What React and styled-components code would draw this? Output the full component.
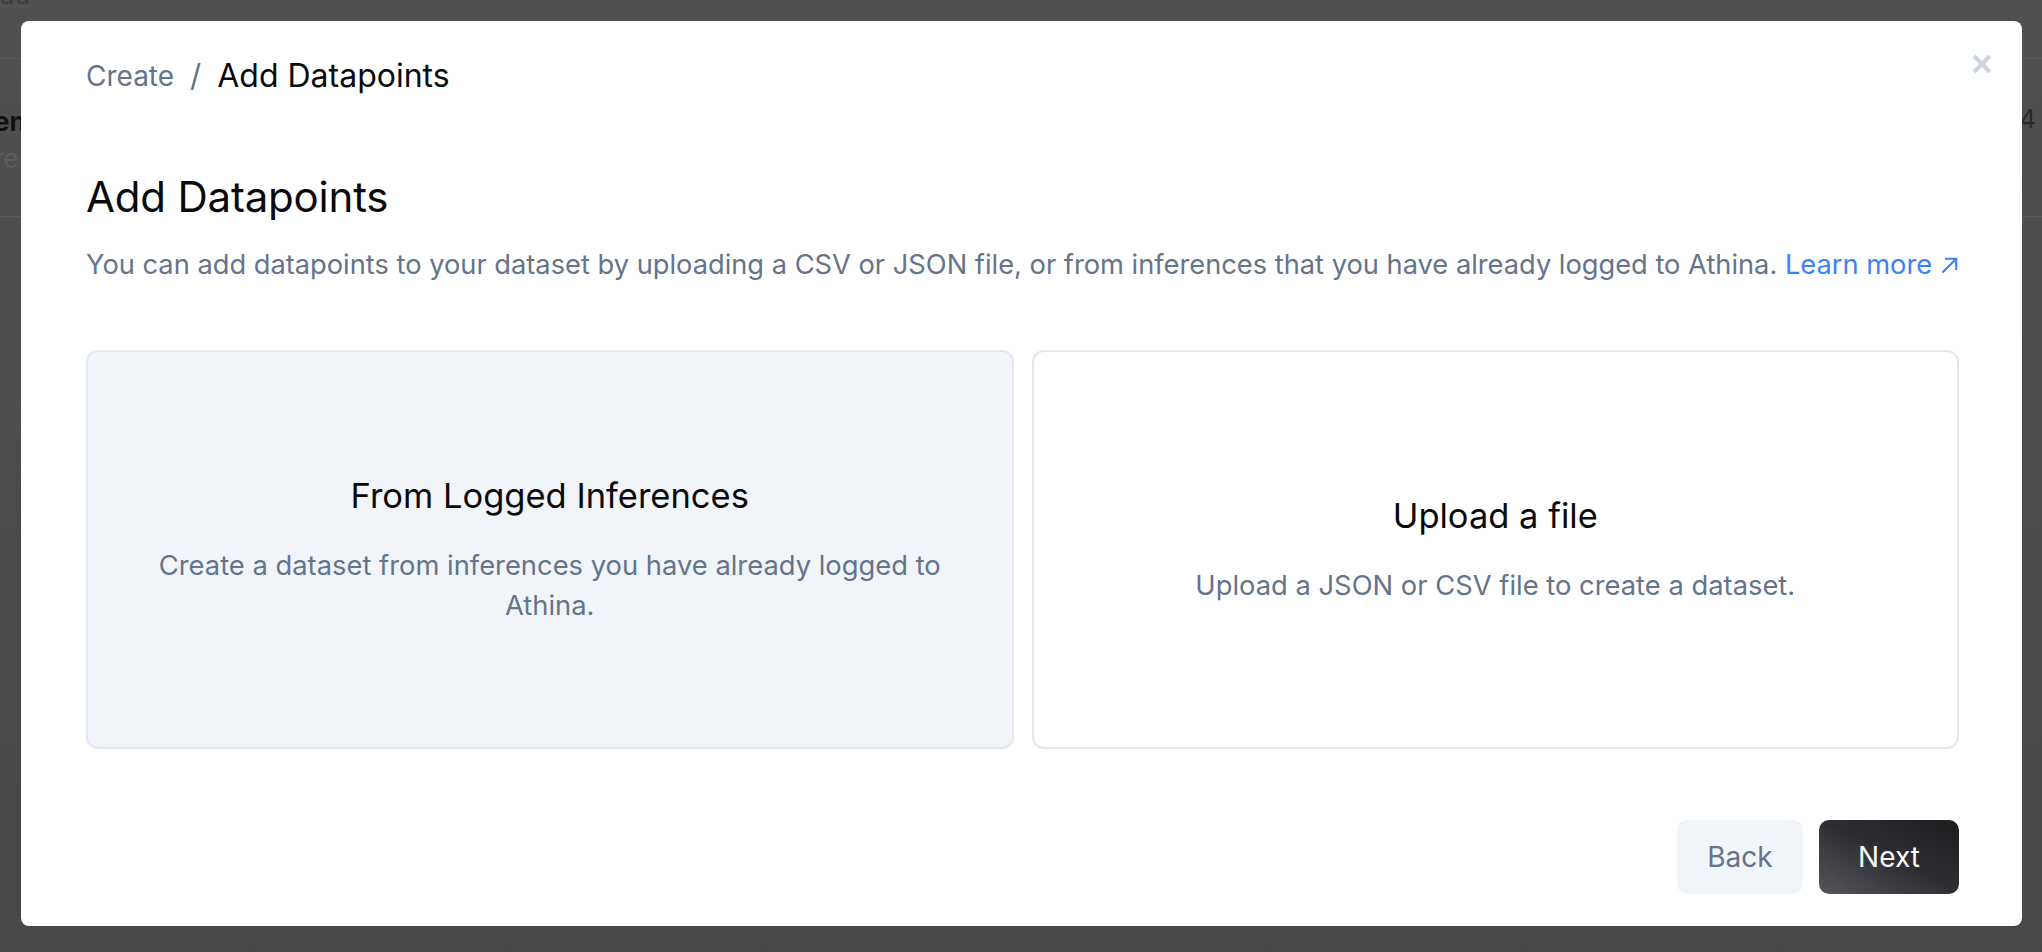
import React from 'react'
import styled, { createGlobalStyle } from 'styled-components'

const GlobalStyle = createGlobalStyle`
  html, body {
    margin:0;
    padding:0;
  }
  body {
    font-family: Inter, "Noto Sans", sans-serif;
    background:#4c4c4c;
  }
  * { box-sizing:border-box; }
`

const Screen = styled.div`
  position:relative;
  width:100%;
  height:100vh;
  overflow:hidden;
  background:linear-gradient(180deg, #505050 0%, #474747 100%);
`

// page that sits behind the dimmed overlay
const BackPage = styled.div`
  display:flex;
  flex-direction:column;
`
const TopStrip = styled.div`
  height:59px;
  border-bottom:1px solid #5b5b5b;
  overflow:hidden;
  font-size:26px;
  line-height:30px;
  color:#3d3d40;
  span {
    display:block;
    margin-top:-20px;
  }
`
const Row = styled.div`
  height:158px;
  border-bottom:1px solid #5b5b5b;
  display:flex;
  justify-content:space-between;
  align-items:flex-start;
`
const RowMain = styled.div`
  padding-top:46px;
  margin-left:-6px;
  display:flex;
  flex-direction:column;
  gap:3px;
  font-size:26px;
  line-height:34px;
`
const RowName = styled.div`
  font-weight:700;
  color:#121212;
`
const RowSub = styled.div`
  color:#5c5d63;
`
const RowValue = styled.div`
  padding:43px 6px 0 0;
  font-size:26px;
  line-height:34px;
  color:#2a2a2c;
`

const Overlay = styled.div`
  position:absolute;
  inset:0;
  display:flex;
  padding:21px 20px 26px 21px;
`

const Modal = styled.div`
  position:relative;
  flex:1;
  display:flex;
  flex-direction:column;
  background:#fff;
  border-radius:8px;
  padding:35px 63px 32px 65px;
`

const Close = styled.button`
  position:absolute;
  top:33px;
  right:30px;
  width:20px;
  height:20px;
  padding:0;
  border:none;
  background:none;
  cursor:pointer;
  svg { display:block; }
`

const Crumbs = styled.nav`
  display:flex;
  align-items:center;
  gap:16px;
  line-height:40px;
  height:40px;
`
const Crumb = styled.span`
  font-size:${p => (p.$current ? '32px' : '28px')};
  color:${p => (p.$current ? '#0a0a0a' : '#64748b')};
`
const Slash = styled.span`
  color:#64748b;
  font-size:31px;
`

const Title = styled.h2`
  margin:73px 0 0;
  font-size:42px;
  line-height:56px;
  font-weight:400;
  color:#0a0a0a;
  letter-spacing:-0.2px;
`

const Lead = styled.p`
  margin:20px 0 0;
  font-size:27.25px;
  line-height:40px;
  color:#64748b;
  white-space:nowrap;
`
const LearnMore = styled.a`
  color:#3b82f6;
  text-decoration:none;
  display:inline-flex;
  align-items:center;
  gap:9px;
  svg { margin-top:1px; }
`

const Options = styled.div`
  margin-top:65px;
  display:grid;
  grid-template-columns:1fr 1fr;
  gap:18px;
  height:399px;
`
const Option = styled.div`
  display:flex;
  flex-direction:column;
  align-items:center;
  justify-content:center;
  text-align:center;
  padding:0 58px;
  border:2px solid #e2e8f0;
  border-radius:12px;
  background:${p => (p.$active ? '#f1f4f9' : '#ffffff')};
  cursor:pointer;
`
const OptionTitle = styled.h3`
  margin:0;
  font-size:34.5px;
  line-height:44px;
  font-weight:400;
  color:#0a0a0a;
`
const OptionText = styled.p`
  margin:28px 0 0;
  max-width:810px;
  font-size:27.35px;
  line-height:40px;
  color:#64748b;
`

const Footer = styled.div`
  margin-top:71px;
  display:flex;
  justify-content:flex-end;
  gap:16px;
`
const Button = styled.button`
  height:74px;
  min-width:${p => (p.$primary ? '140px' : '126px')};
  border:none;
  border-radius:10px;
  font-family:inherit;
  font-size:28px;
  color:${p => (p.$primary ? '#f8fafc' : '#64748b')};
  background:${p =>
    p.$primary
      ? 'linear-gradient(to top right, #55565c 0%, #2e2e33 50%, #1c1c1f 100%)'
      : '#f1f5f9'};
  cursor:pointer;
`

const options = [
  {
    title: 'From Logged Inferences',
    text: 'Create a dataset from inferences you have already logged to Athina.',
    active: true,
  },
  {
    title: 'Upload a file',
    text: 'Upload a JSON or CSV file to create a dataset.',
    active: false,
  },
]

export default function App() {
  return (
    <Screen>
      <GlobalStyle />
      <BackPage>
        <TopStrip>
          <span>ad</span>
        </TopStrip>
        <Row>
          <RowMain>
            <RowName>end</RowName>
            <RowSub>rem</RowSub>
          </RowMain>
          <RowValue>4</RowValue>
        </Row>
      </BackPage>

      <Overlay>
        <Modal>
          <Close aria-label="Close">
            <svg width="20" height="20" viewBox="0 0 20 20">
              <path d="M2 2 L18 18 M18 2 L2 18" stroke="#cbd5e1" strokeWidth="4.2" />
            </svg>
          </Close>

          <Crumbs>
            <Crumb>Create</Crumb>
            <Slash>/</Slash>
            <Crumb $current>Add Datapoints</Crumb>
          </Crumbs>

          <Title>Add Datapoints</Title>
          <Lead>
            You can add datapoints to your dataset by uploading a CSV or JSON file, or from
            inferences that you have already logged to Athina.{' '}
            <LearnMore href="#">
              Learn more
              <svg width="17" height="17" viewBox="0 0 17 17" fill="none">
                <path d="M1.5 15.5 L15 2 M4 1.8 H15.2 V13" stroke="#3b82f6" strokeWidth="2.1" />
              </svg>
            </LearnMore>
          </Lead>

          <Options>
            {options.map(o => (
              <Option key={o.title} $active={o.active}>
                <OptionTitle>{o.title}</OptionTitle>
                <OptionText>{o.text}</OptionText>
              </Option>
            ))}
          </Options>

          <Footer>
            <Button>Back</Button>
            <Button $primary>Next</Button>
          </Footer>
        </Modal>
      </Overlay>
    </Screen>
  )
}
